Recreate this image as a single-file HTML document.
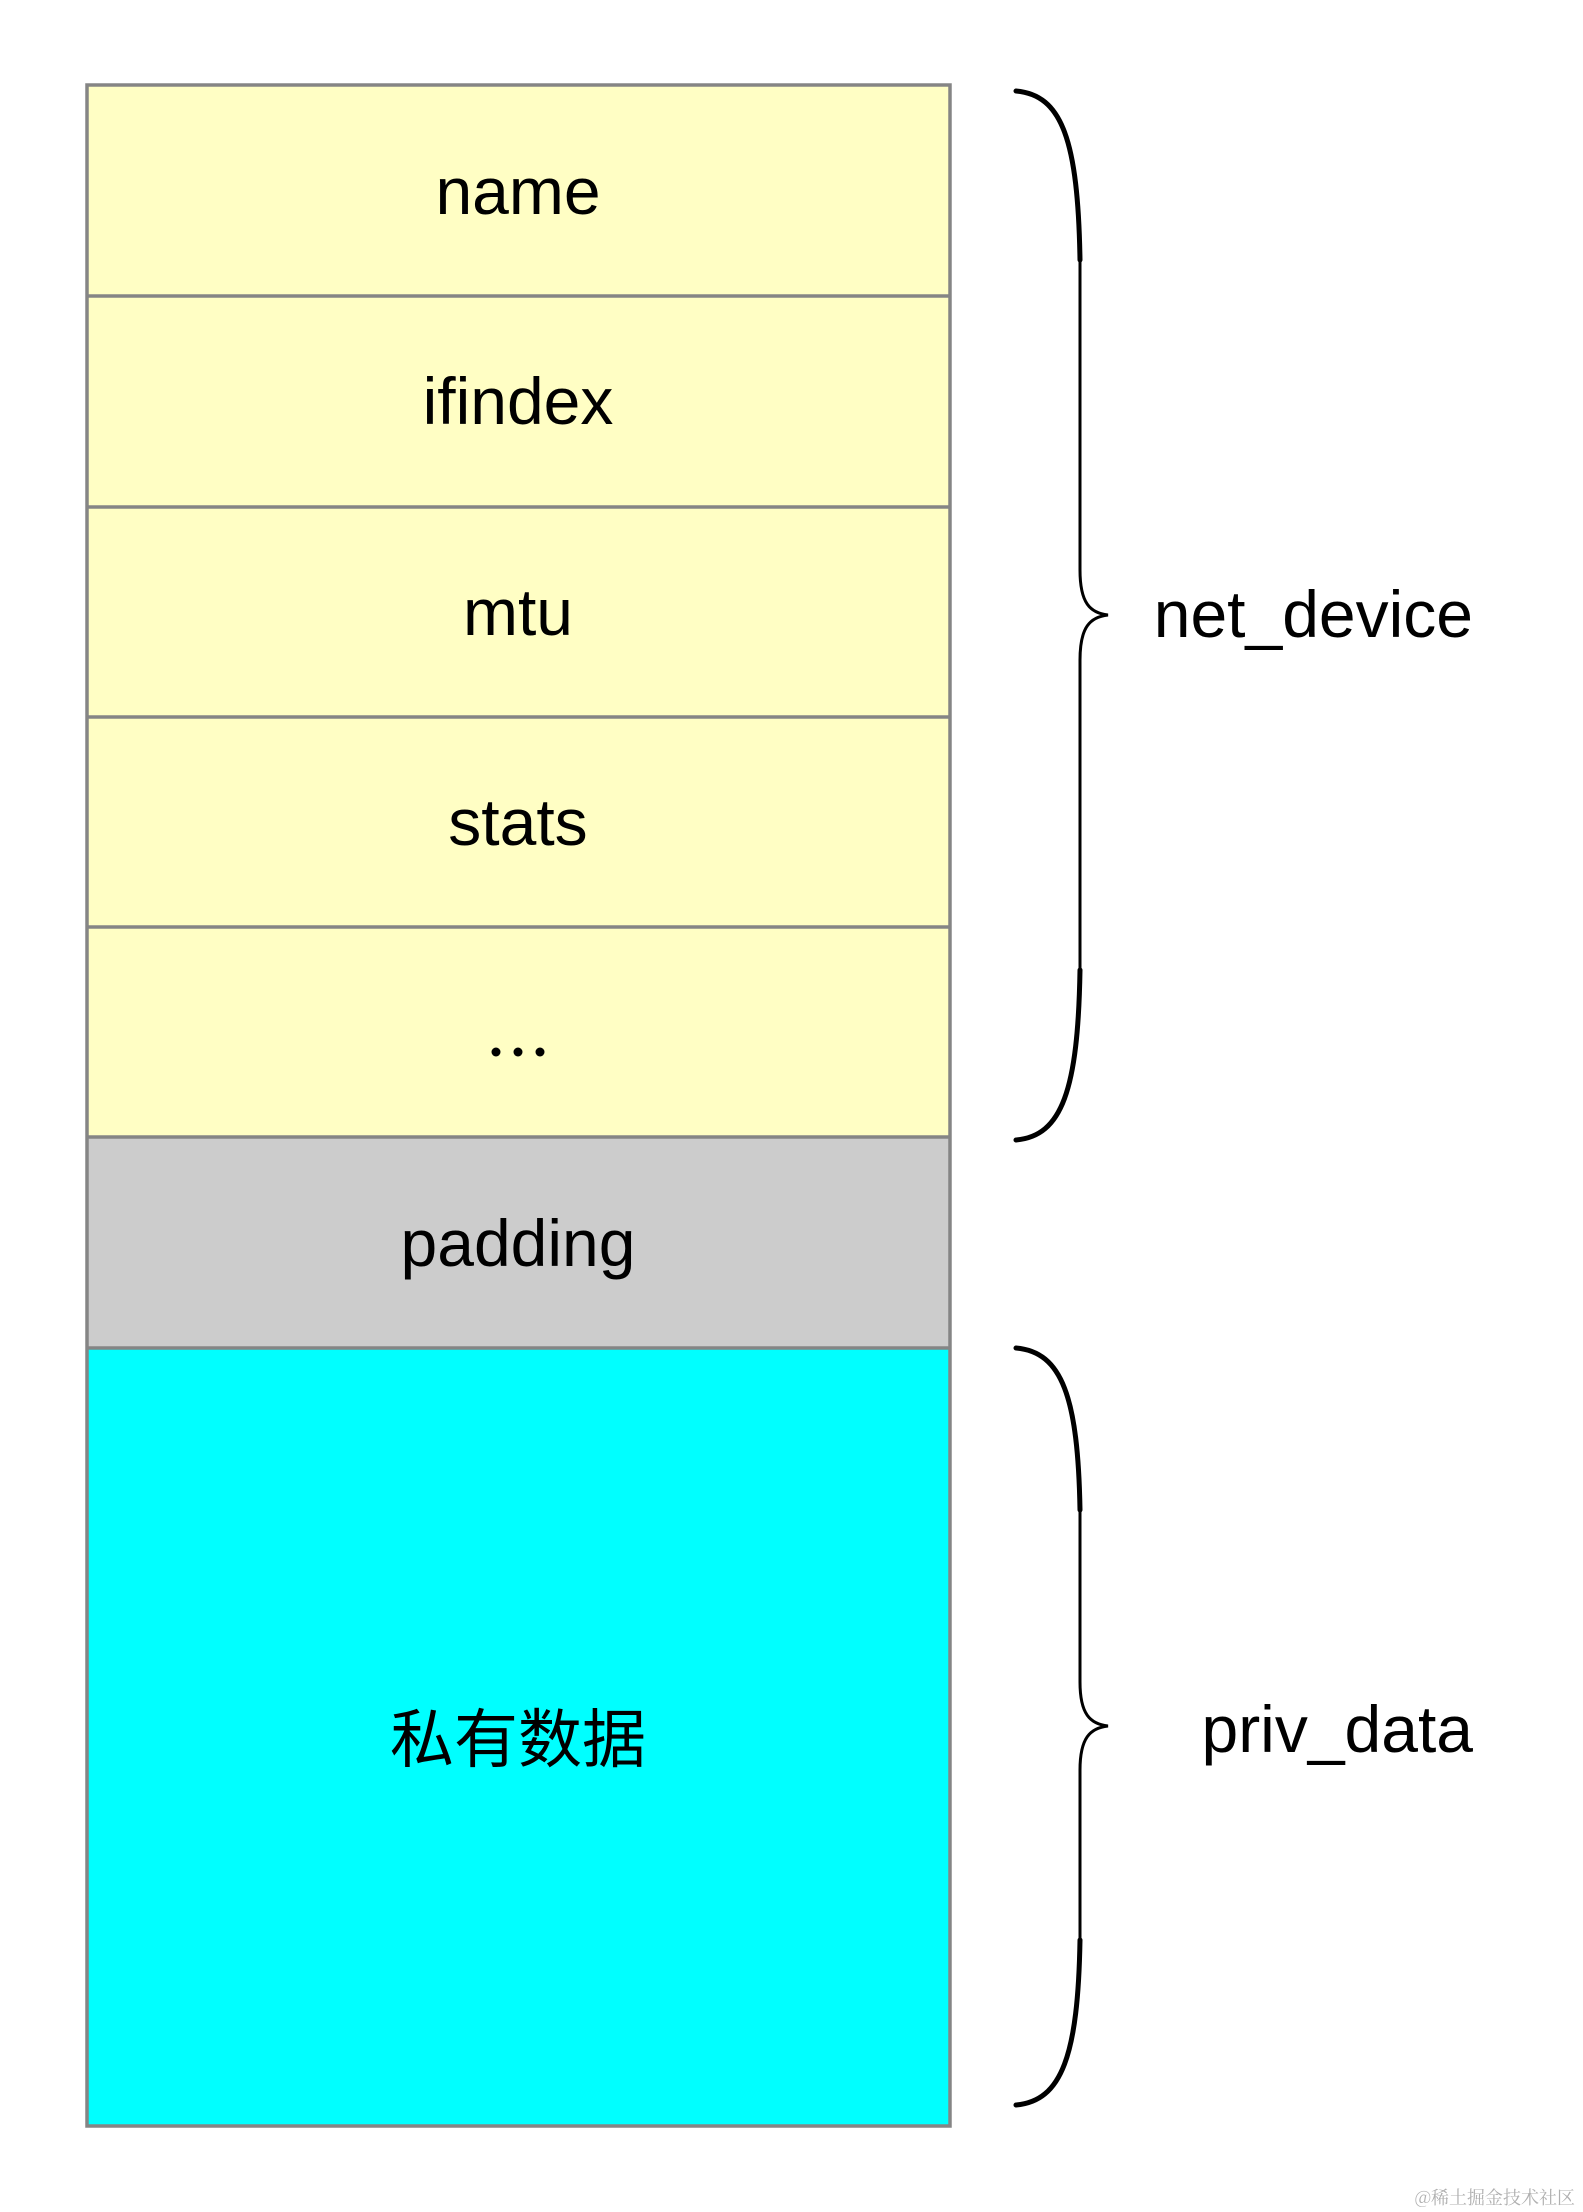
<!DOCTYPE html>
<html><head><meta charset="utf-8">
<style>
html,body{margin:0;padding:0;background:#fff;}
svg{display:block;}
</style></head>
<body>
<svg width="1583" height="2212" viewBox="0 0 1583 2212" xmlns="http://www.w3.org/2000/svg">
<rect x="0" y="0" width="1583" height="2212" fill="#fff"/>
<rect x="87" y="85" width="863" height="1052" fill="#FFFEC4"/>
<rect x="87" y="1137" width="863" height="211" fill="#CCCCCC"/>
<rect x="87" y="1348" width="863" height="778" fill="#00FFFF"/>
<g stroke="#858585" stroke-width="3.5" fill="none">
<rect x="87" y="85" width="863" height="2041"/>
<line x1="87" y1="296" x2="950" y2="296"/>
<line x1="87" y1="507" x2="950" y2="507"/>
<line x1="87" y1="717" x2="950" y2="717"/>
<line x1="87" y1="927" x2="950" y2="927"/>
<line x1="87" y1="1137" x2="950" y2="1137"/>
<line x1="87" y1="1348" x2="950" y2="1348"/>
</g>
<g font-family="Liberation Sans, Arial, sans-serif" font-size="66" fill="#000" text-anchor="middle">
<text x="518" y="214">name</text>
<text x="518" y="424">ifindex</text>
<text x="518" y="635">mtu</text>
<text x="518" y="845">stats</text>
<text x="518" y="1266">padding</text>
</g>
<circle cx="496" cy="1052" r="4.5" fill="#000"/>
<circle cx="518" cy="1052" r="4.5" fill="#000"/>
<circle cx="540" cy="1052" r="4.5" fill="#000"/>
<text x="518" y="1762" text-anchor="middle" font-family="Liberation Sans, 'Noto Sans CJK SC', sans-serif" font-size="64" fill="#000">私有数据</text>
<g fill="none" stroke="#000" stroke-linecap="round">
<path d="M1016,91 C1062,95 1078,140 1080,260 L1080,570 C1080,603 1090,613 1108,615 C1090,617 1080,627 1080,660 L1080,970 C1078,1090 1062,1136 1016,1140" stroke-width="3"/>
<path d="M1016,91 C1062,95 1078,140 1080,260 M1080,970 C1078,1090 1062,1136 1016,1140" stroke-width="5"/>
<path d="M1016,1348 C1062,1352 1078,1397 1080,1510 L1080,1682 C1080,1714 1090,1724 1108,1726 C1090,1728 1080,1738 1080,1770 L1080,1940 C1078,2055 1062,2101 1016,2105" stroke-width="3"/>
<path d="M1016,1348 C1062,1352 1078,1397 1080,1510 M1080,1940 C1078,2055 1062,2101 1016,2105" stroke-width="5"/>
</g>
<g font-family="Liberation Sans, Arial, sans-serif" font-size="66" fill="#000" text-anchor="end">
<text x="1473" y="637">net_device</text>
<text x="1473" y="1752">priv_data</text>
</g>
<text x="1575" y="2204" text-anchor="end" font-family="'Noto Serif CJK SC', 'Noto Sans CJK SC', serif" font-size="18" fill="#b0b0b0">@稀土掘金技术社区</text>
</svg>
</body></html>
